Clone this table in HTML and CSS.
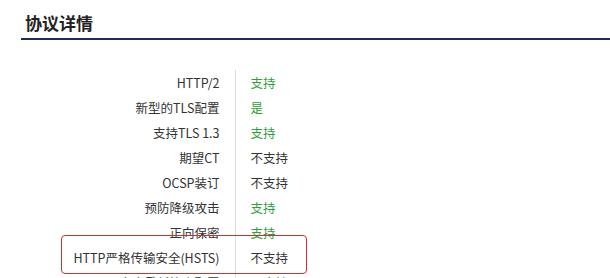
FILE: index.html
```html
<!DOCTYPE html>
<html lang="zh-CN">
<head>
    <meta charset="UTF-8">
    <meta name="viewport" content="width=device-width, initial-scale=1.0">
    <title>协议详情</title>
    <link rel="stylesheet" href="styles.css">
</head>
<body>
    <div class="section">
        <h2 class="section-title">协议详情</h2>

        <div class="detail-wrap">
            <table class="detail-table">
                <tr><td class="label">HTTP/2</td><td class="value yes">支持</td></tr>
                <tr><td class="label">新型的TLS配置</td><td class="value yes">是</td></tr>
                <tr><td class="label">支持TLS 1.3</td><td class="value yes">支持</td></tr>
                <tr><td class="label">期望CT</td><td class="value">不支持</td></tr>
                <tr><td class="label">OCSP装订</td><td class="value">不支持</td></tr>
                <tr><td class="label">预防降级攻击</td><td class="value yes">支持</td></tr>
                <tr><td class="label">正向保密</td><td class="value yes">支持</td></tr>
                <tr><td class="label">HTTP严格传输安全(HSTS)</td><td class="value">不支持</td></tr>
                <tr><td class="label">安全重新协商配置</td><td class="value">不支持</td></tr>
            </table>
            <!-- highlight box over the HSTS row -->
            <div class="highlight"></div>
        </div>
    </div>
</body>
</html>
```

FILE: styles.css
```css
* {
    box-sizing: border-box;
    margin: 0;
    padding: 0;
}

body {
    background: #fff;
    font-family: "Noto Sans CJK SC", "Liberation Sans", sans-serif;
    color: #333;
    overflow: hidden;
}

.section {
    padding-left: 21px;
}

/* Title with underline */
.section-title {
    font-size: 17px;
    font-weight: bold;
    color: #222;
    line-height: 26px;
    padding: 10px 0 2px 4px;
    border-bottom: 2px solid #1f2a5e;
}

.detail-wrap {
    position: relative;
    margin-top: 30px;
}

.detail-table {
    border-collapse: collapse;
    font-size: 12.5px;
}

.detail-table td {
    height: 25px;
    line-height: 25px;
    padding: 0;
    white-space: nowrap;
}

.detail-table .label {
    width: 214px;
    text-align: right;
    padding-right: 15px;
    border-right: 1px solid #ddd;
    color: #333;
}

.detail-table .value {
    padding-left: 15px;
    color: #333;
}

.detail-table .value.yes {
    color: #2f9e3c;
}

.highlight {
    position: absolute;
    left: 40px;
    top: 165px;
    width: 246px;
    height: 39px;
    border: 1px solid #c8342f;
    border-radius: 4px;
}
```
